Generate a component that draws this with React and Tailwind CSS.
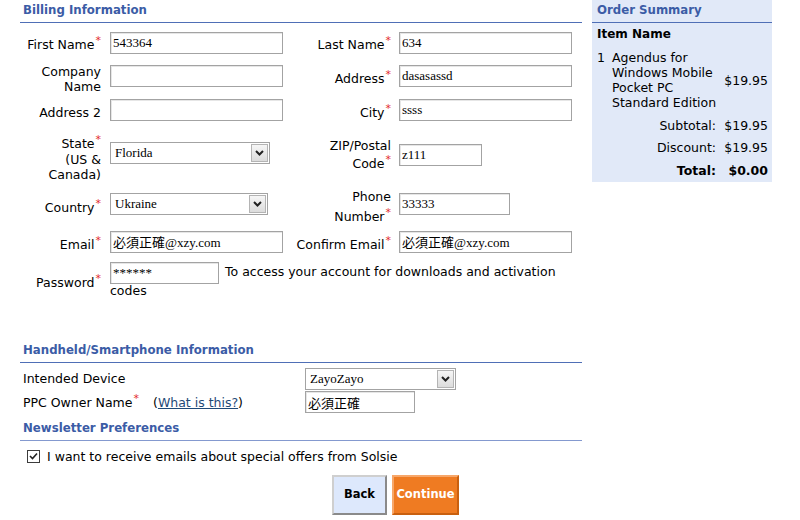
import React from 'react';

const Star = ({ className = '' }) => (
  <span className={`text-[#e32b2b] text-[11px] relative -top-[5px] ml-[1px] ${className}`}>*</span>
);

const Input = ({ w, value = '', cjk = false }) => (
  <input
    readOnly
    value={value}
    className={`h-[22px] ${w} border border-[#a3a3a3] shadow-[inset_1px_1px_0_#e6e6e6] bg-white px-[2px] text-[13px] text-black outline-none ${cjk ? "font-['Liberation_Serif','Noto_Sans_CJK_TC',serif]" : "font-['Liberation_Serif',serif]"}`}
  />
);

const Select = ({ w, value }) => (
  <div className={`h-[22px] ${w} border border-[#a3a3a3] bg-white flex items-center justify-between pl-[4px] pr-[1px]`}>
    <span className="font-['Liberation_Serif',serif] text-[13px] text-black">{value}</span>
    <span className="w-[17px] h-[18px] border border-[#b4b4b4] bg-gradient-to-b from-[#f6f6f6] to-[#dcdcdc] flex items-center justify-center">
      <svg width="9" height="6" viewBox="0 0 9 6">
        <path d="M1 1 L4.5 4.5 L8 1" fill="none" stroke="#222" strokeWidth="2" />
      </svg>
    </span>
  </div>
);

const Heading = ({ children, line = 'border-[#4f6fb6]' }) => (
  <div className={`h-[23px] leading-[21px] border-b ${line} pl-[3px] font-bold text-[11.75px] text-[#3b5ca6]`}>{children}</div>
);

const LeftLabel = ({ children, pad = 'pt-[5px]' }) => (
  <div className={`w-[81px] text-right leading-[15px] ${pad}`}>{children}</div>
);

const RightLabel = ({ children, pad = 'pt-[5px]' }) => (
  <div className={`w-[101px] text-right leading-[15px] ${pad}`}>{children}</div>
);

export default function App() {
  return (
    <div className="w-[800px] h-[520px] bg-white flex items-start font-['DejaVu_Sans',sans-serif] text-[12.5px] text-black">
      {/* main form */}
      <div className="w-[562px] ml-[20px]">
        <Heading>Billing Information</Heading>

        <div className="flex items-center h-[23px] mt-[8px]">
          <div className="w-[270px] flex items-center">
            <LeftLabel>First Name<Star /></LeftLabel>
            <div className="ml-[9px]"><Input w="w-[173px]" value="543364" /></div>
          </div>
          <div className="flex items-center">
            <RightLabel>Last Name<Star /></RightLabel>
            <div className="ml-[8px]"><Input w="w-[173px]" value="634" /></div>
          </div>
        </div>

        <div className="flex items-center h-[30px] mt-[7px]">
          <div className="w-[270px] flex items-center">
            <LeftLabel>Company<br />Name</LeftLabel>
            <div className="ml-[9px]"><Input w="w-[173px]" /></div>
          </div>
          <div className="flex items-center">
            <RightLabel>Address<Star /></RightLabel>
            <div className="ml-[8px]"><Input w="w-[173px]" value="dasasassd" /></div>
          </div>
        </div>

        <div className="flex items-center h-[22px] mt-[8px]">
          <div className="w-[270px] flex items-center">
            <LeftLabel>Address 2</LeftLabel>
            <div className="ml-[9px]"><Input w="w-[173px]" /></div>
          </div>
          <div className="flex items-center">
            <RightLabel>City<Star /></RightLabel>
            <div className="ml-[8px]"><Input w="w-[173px]" value="ssss" /></div>
          </div>
        </div>

        <div className="flex items-center h-[48px] mt-[10px]">
          <div className="w-[270px] flex items-center">
            <LeftLabel pad="pt-[8px]">State<Star /><br />(US &amp;<br />Canada)</LeftLabel>
            <div className="ml-[9px] mb-[4px]"><Select w="w-[160px]" value="Florida" /></div>
          </div>
          <div className="flex items-center">
            <RightLabel pad="pt-0">ZIP/Postal<br /><span className="inline-block mt-[3px]">Code<Star /></span></RightLabel>
            <div className="ml-[8px]"><Input w="w-[83px]" value="z111" /></div>
          </div>
        </div>

        <div className="flex items-center h-[36px] mt-[7px]">
          <div className="w-[270px] flex items-center">
            <LeftLabel pad="pt-[8px]">Country<Star /></LeftLabel>
            <div className="ml-[9px]"><Select w="w-[158px]" value="Ukraine" /></div>
          </div>
          <div className="flex items-center">
            <RightLabel>Phone<br /><span className="inline-block mt-[5px]">Number<Star /></span></RightLabel>
            <div className="ml-[8px]"><Input w="w-[111px]" value="33333" /></div>
          </div>
        </div>

        <div className="flex items-center h-[22px] mt-[9px]">
          <div className="w-[270px] flex items-center">
            <LeftLabel>Email<Star /></LeftLabel>
            <div className="ml-[9px]"><Input w="w-[173px]" value="必須正確@xzy.com" cjk /></div>
          </div>
          <div className="flex items-center">
            <RightLabel>Confirm Email<Star /></RightLabel>
            <div className="ml-[8px]"><Input w="w-[173px]" value="必須正確@xzy.com" cjk /></div>
          </div>
        </div>

        <div className="flex items-start h-[40px] mt-[9px]">
          <div className="self-center pt-[2px]">
            <LeftLabel pad="pt-0">Password<Star /></LeftLabel>
          </div>
          <div className="ml-[9px] w-[462px] leading-[16px]">
            <Input w="w-[109px]" value="******" />
            <span className="ml-[6px] relative -top-[1px]">To access your account for downloads and activation codes</span>
          </div>
        </div>

        {/* handheld */}
        <div className="mt-[38px]">
          <Heading>Handheld/Smartphone Information</Heading>
        </div>
        <div className="flex items-center h-[22px] mt-[5px]">
          <div className="w-[285px] pl-[3px]">Intended Device</div>
          <Select w="w-[151px]" value="ZayoZayo" />
        </div>
        <div className="flex items-center h-[22px] mt-[1px]">
          <div className="w-[285px] pl-[3px] flex items-center pt-[3px]">
            <span className="w-[130px]">PPC Owner Name<Star /></span>
            <span>
              (<a className="text-[#1f4a78] underline">What is this?</a>)
            </span>
          </div>
          <Input w="w-[110px]" value="必須正確" cjk />
        </div>

        <div className="mt-[5px]">
          <Heading line="border-[#8499cf]">Newsletter Preferences</Heading>
        </div>
        <div className="flex items-center h-[15px] mt-[8px] pl-[7px]">
          <span className="w-[13px] h-[13px] border border-[#3c3c3c] bg-white flex items-center justify-center">
            <svg width="9" height="9" viewBox="0 0 9 9">
              <path d="M1 4 L3.5 6.5 L8 1.5" fill="none" stroke="#222" strokeWidth="1.6" />
            </svg>
          </span>
          <span className="ml-[7px] pt-[1px]">I want to receive emails about special offers from Solsie</span>
        </div>

        <div className="flex mt-[11px] ml-[312px] gap-[5px]">
          <button className="w-[55px] h-[40px] bg-[#dde8fc] border-2 border-t-[#cfcfcf] border-l-[#cfcfcf] border-b-[#8a8a8a] border-r-[#8a8a8a] font-bold text-[11.5px] text-black">
            Back
          </button>
          <button className="w-[67px] h-[40px] bg-[#ef7b22] border-2 border-t-[#f7a76a] border-l-[#f7a76a] border-b-[#c9600f] border-r-[#c9600f] font-bold text-[11.5px] text-white">
            Continue
          </button>
        </div>
      </div>

      {/* order summary */}
      <div className="w-[180px] ml-[10px] bg-[#e1e9f8] pb-[4px]">
        <div className="h-[23px] leading-[21px] border-b border-[#4f6fb6] pl-[5px] font-bold text-[11.75px] text-[#3b5ca6]">Order Summary</div>
        <div className="pl-[5px] pr-[4px]">
          <div className="mt-[4px] leading-[15px] font-bold text-[12px]">Item Name</div>
          <div className="flex mt-[8px] leading-[15px]">
            <span className="w-[15px]">1</span>
            <span className="w-[108px]">Agendus for Windows Mobile Pocket PC Standard Edition</span>
            <span className="flex-1 text-right self-center">$19.95</span>
          </div>
          <div className="flex mt-[8px] leading-[15px]">
            <span className="flex-1 text-right pr-[4px]">Subtotal:</span>
            <span className="w-[48px] text-right">$19.95</span>
          </div>
          <div className="flex mt-[7px] leading-[15px]">
            <span className="flex-1 text-right pr-[4px]">Discount:</span>
            <span className="w-[48px] text-right">$19.95</span>
          </div>
          <div className="flex mt-[8px] leading-[15px] font-bold">
            <span className="flex-1 text-right pr-[4px]">Total:</span>
            <span className="w-[48px] text-right">$0.00</span>
          </div>
        </div>
      </div>
    </div>
  );
}
